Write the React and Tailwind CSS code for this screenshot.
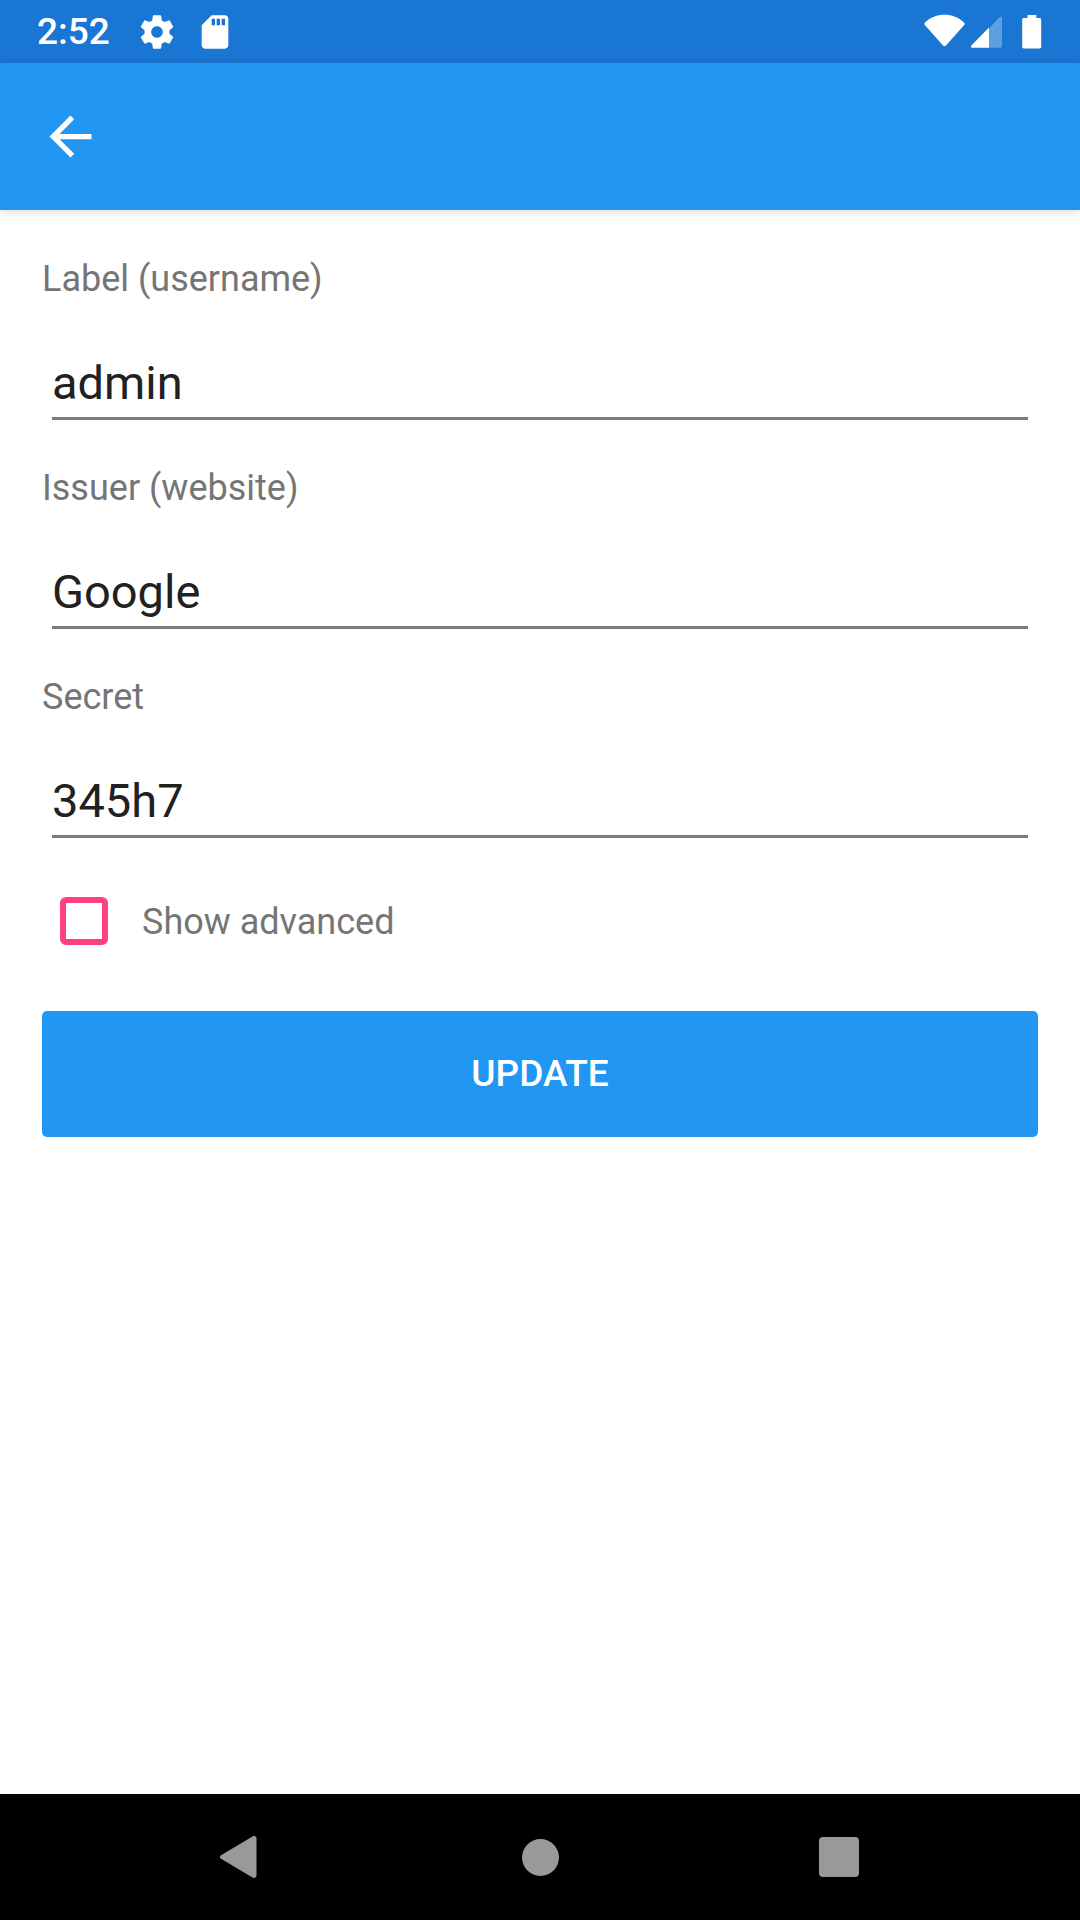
import { useState } from "react";

function StatusBar() {
  return (
    <div className="flex h-[63px] items-center bg-[#1976d2] pl-[37px] pr-[38px] text-white">
      <time className="text-[37px] font-medium leading-[46px]">2:52</time>
      <svg className="ml-[27px] size-10" viewBox="0 0 24 24" fill="currentColor" aria-hidden="true">
        <path d="M19.43 12.98c.04-.32.07-.64.07-.98s-.03-.66-.07-.98l2.11-1.65c.19-.15.24-.42.12-.64l-2-3.46c-.12-.22-.39-.3-.61-.22l-2.49 1c-.52-.4-1.08-.73-1.69-.98l-.38-2.65C14.46 2.18 14.25 2 14 2h-4c-.25 0-.46.18-.49.42l-.38 2.65c-.61.25-1.17.59-1.69.98l-2.49-1c-.23-.09-.49 0-.61.22l-2 3.46c-.13.22-.07.49.12.64l2.11 1.65c-.04.32-.07.65-.07.98s.03.66.07.98l-2.11 1.65c-.19.15-.24.42-.12.64l2 3.46c.12.22.39.3.61.22l2.49-1c.52.4 1.08.73 1.69.98l.38 2.65c.03.24.24.42.49.42h4c.25 0 .46-.18.49-.42l.38-2.65c.61-.25 1.17-.59 1.69-.98l2.49 1c.23.09.49 0 .61-.22l2-3.46c.12-.22.07-.49-.12-.64l-2.11-1.65zM12 15.5c-1.93 0-3.5-1.57-3.5-3.5s1.57-3.5 3.5-3.5 3.5 1.57 3.5 3.5-1.57 3.5-3.5 3.5z" />
      </svg>
      <svg className="ml-[18px] size-10" viewBox="0 0 24 24" fill="currentColor" aria-hidden="true">
        <path d="M18 2h-8L4.02 8 4 20c0 1.1.9 2 2 2h12c1.1 0 2-.9 2-2V4c0-1.1-.9-2-2-2zm-6 6h-2V4h2v4zm3 0h-2V4h2v4zm3 0h-2V4h2v4z" />
      </svg>
      <div className="ml-auto flex items-center">
        <svg className="h-9 w-[41px]" viewBox="0 0 41 36" fill="currentColor" aria-hidden="true">
          <path d="M1 8.5C6.500 3.300 13 .8 20.500.8S34.500 3.300 40 8.500c.8.8.8 1.700.2 2.500L22 31.600c-.9 1-2.100 1-3 0L.8 11C.2 10.200.2 9.300 1 8.500z" />
        </svg>
        <svg className="ml-1.5 h-9 w-8" viewBox="0 0 32 36" fill="currentColor" aria-hidden="true">
          <path opacity=".3" d="M18 14.500 28.500 3.200c1-1 2.500-.6 2.500.8v28c0 1-.6 1.700-1.700 1.700H18z" />
          <path d="M18 13.500v20.300H1.600C0 33.800-.4 32.300.6 31.300z" />
        </svg>
        <svg className="ml-[19px] h-9 w-5" viewBox="0 0 20 36" fill="currentColor" aria-hidden="true">
          <path d="M5.500 1h8.800v3h3.200c1 0 1.700.7 1.700 1.700v27c0 1-.7 1.700-1.700 1.700h-15.600c-1 0-1.700-.7-1.700-1.700v-27C.2 4.700.9 4 1.900 4h3.600z" />
        </svg>
      </div>
    </div>
  );
}

function AppBar() {
  return (
    <header className="flex h-[147px] items-center bg-[#2196f3] px-[39px] text-white shadow-[0_2px_10px_rgba(0,0,0,0.15)]">
      <button type="button" aria-label="Back">
        <svg className="size-[63px]" viewBox="0 0 24 24" fill="currentColor" aria-hidden="true">
          <path d="M20 11H7.83l5.590-5.590L12 4l-8 8 8 8 1.410-1.410L7.830 13H20v-2z" />
        </svg>
      </button>
    </header>
  );
}

function Field({ id, label, value, onChange }) {
  return (
    <div className="flex flex-col gap-[52px]">
      <label htmlFor={id} className="text-[36px] leading-[46px] text-[#757575]">
        {label}
      </label>
      <div className="px-2.5">
        <input
          id={id}
          type="text"
          value={value}
          onChange={(e) => onChange(e.target.value)}
          className="block h-[66px] w-full border-b-3 border-[#7b7b7b] bg-transparent pb-[7px] text-[47px] leading-[56px] text-[#212121] outline-none"
        />
      </div>
    </div>
  );
}

function NavigationBar() {
  return (
    <nav className="flex h-[126px] bg-black px-[92px] text-[#999]">
      <button type="button" aria-label="Back" className="flex flex-1 items-center justify-center">
        <svg className="h-11 w-11" viewBox="0 0 44 44" fill="currentColor" aria-hidden="true">
          <path d="M2 20.300 33.500 1.500c1.500-.9 4-.5 4 2v37c0 2.500-2.500 2.900-4 2L2 23.700c-1.400-.9-1.400-2.500 0-3.400z" />
        </svg>
      </button>
      <button type="button" aria-label="Home" className="flex flex-1 items-center justify-center">
        <span className="size-[37px] rounded-full bg-current" />
      </button>
      <button type="button" aria-label="Recent apps" className="flex flex-1 items-center justify-center">
        <span className="size-10 rounded bg-current" />
      </button>
    </nav>
  );
}

export default function App() {
  const [username, setUsername] = useState("admin");
  const [issuer, setIssuer] = useState("Google");
  const [secret, setSecret] = useState("345h7");

  return (
    <div className="flex min-h-screen flex-col bg-white font-[Roboto,sans-serif]">
      <StatusBar />
      <AppBar />
      <main className="flex-1 px-[42px] pt-[46px] pb-10">
        <form className="flex flex-col" onSubmit={(e) => e.preventDefault()}>
          <div className="flex flex-col gap-[45px]">
            <Field id="username" label="Label (username)" value={username} onChange={setUsername} />
            <Field id="issuer" label="Issuer (website)" value={issuer} onChange={setIssuer} />
            <Field id="secret" label="Secret" value={secret} onChange={setSecret} />
          </div>
          <label className="mt-[59px] flex items-end gap-[34px] self-start pl-[18px] text-[36px] leading-[46px] text-[#757575]">
            <input
              type="checkbox"
              className="size-12 appearance-none rounded-[6px] border-6 border-[#ff4081] checked:bg-[#ff4081]"
            />
            Show advanced
          </label>
          <button
            type="submit"
            className="mt-[66px] h-[126px] rounded-[5px] bg-[#2196f3] text-[37px] font-medium leading-[46px] text-white"
          >
            UPDATE
          </button>
        </form>
      </main>
      <NavigationBar />
    </div>
  );
}
